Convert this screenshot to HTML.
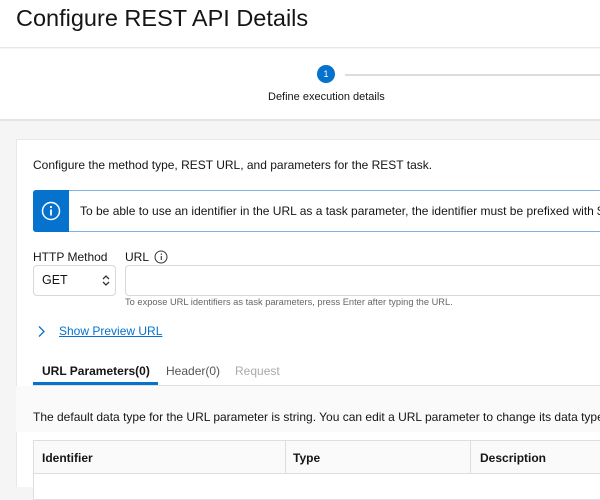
<!DOCTYPE html>
<html><head><style>
*{margin:0;padding:0;box-sizing:border-box}
body{width:600px;height:487px;overflow:hidden;background:#f5f5f5;font-family:"Liberation Sans",Arial,sans-serif;color:#161513;position:relative}
.a{position:absolute;white-space:nowrap}
</style></head><body>
<div class="a" style="left:0;top:0;width:600px;height:48px;background:#fff;border-bottom:1px solid #e6e6e6"></div>
<div class="a" style="left:16px;top:5px;font-size:23.5px;color:#161513">Configure REST API Details</div>
<div class="a" style="left:0;top:49px;width:600px;height:72px;background:#fff;border-bottom:2px solid #e4e4e4"></div>
<div class="a" style="left:317px;top:65px;width:18px;height:18px;border-radius:50%;background:#0572ce;color:#fff;font-size:9px;text-align:center;line-height:18px">1</div>
<div class="a" style="left:345px;top:74px;width:255px;height:2px;background:#dcdcdc"></div>
<div class="a" style="left:268px;top:91px;font-size:11px;color:#161513">Define execution details</div>
<div class="a" style="left:16px;top:139px;width:584px;height:348px;background:#fff;border-top:1px solid #e8e8e8;border-left:1px solid #e8e8e8"></div>
<div class="a" style="left:33px;top:158px;font-size:12px">Configure the method type, REST URL, and parameters for the REST task.</div>
<div class="a" style="left:33px;top:190px;width:580px;height:42px;border:1px solid #7fb2e5;border-radius:3px;background:#fff"></div>
<div class="a" style="left:33px;top:190px;width:36px;height:42px;background:#0572ce;border-radius:3px 0 0 3px"></div>
<svg class="a" style="left:41px;top:201px" width="20" height="20" viewBox="0 0 20 20"><circle cx="10" cy="10" r="8.5" fill="none" stroke="#fff" stroke-width="1.5"/><rect x="9.1" y="8.5" width="1.8" height="6" fill="#fff"/><circle cx="10" cy="6" r="1.1" fill="#fff"/></svg>
<div class="a" style="left:80px;top:204px;font-size:12px">To be able to use an identifier in the URL as a task parameter, the identifier must be prefixed with $</div>
<div class="a" style="left:33px;top:250px;font-size:12px">HTTP Method</div>
<div class="a" style="left:125px;top:250px;font-size:12px">URL</div>
<svg class="a" style="left:154px;top:250px" width="14" height="14" viewBox="0 0 14 14"><circle cx="7" cy="7" r="6" fill="none" stroke="#333" stroke-width="1"/><path d="M7.3 6v4" stroke="#333" stroke-width="1.1"/><circle cx="7.4" cy="4.2" r=".7" fill="#333"/></svg>
<div class="a" style="left:33px;top:265px;width:83px;height:31px;border:1px solid #d8d8d8;border-radius:4px"></div>
<div class="a" style="left:42px;top:273px;font-size:12.5px">GET</div>
<svg class="a" style="left:102px;top:274px" width="8" height="13" viewBox="0 0 8 13"><path d="M1 5l3-3 3 3M1 8l3 3 3-3" fill="none" stroke="#333" stroke-width="1.3"/></svg>
<div class="a" style="left:125px;top:265px;width:480px;height:31px;border:1px solid #d8d8d8;border-radius:4px"></div>
<div class="a" style="left:125px;top:297px;font-size:9.3px;color:#666">To expose URL identifiers as task parameters, press Enter after typing the URL.</div>
<svg class="a" style="left:37px;top:325px" width="10" height="13" viewBox="0 0 10 13"><path d="M2 1.5l5 5-5 5" fill="none" stroke="#0572ce" stroke-width="1.3"/></svg>
<div class="a" style="left:59px;top:324px;font-size:12px;color:#0572ce;text-decoration:underline">Show Preview URL</div>
<div class="a" style="left:42px;top:364px;font-size:12px;font-weight:bold">URL Parameters(0)</div>
<div class="a" style="left:166px;top:364px;font-size:12px;color:#555">Header(0)</div>
<div class="a" style="left:235px;top:364px;font-size:12px;color:#aaa">Request</div>
<div class="a" style="left:33px;top:385px;width:567px;height:1px;background:#dedede"></div>
<div class="a" style="left:33px;top:382px;width:125px;height:3px;background:#0572ce"></div>
<div class="a" style="left:16px;top:386px;width:584px;height:46px;background:#fafafa"></div>
<div class="a" style="left:33px;top:410px;font-size:12px">The default data type for the URL parameter is string. You can edit a URL parameter to change its data type</div>
<div class="a" style="left:33px;top:440px;width:570px;height:60px;border:1px solid #dedede;background:#fff"></div>
<div class="a" style="left:33px;top:440px;width:570px;height:34px;border:1px solid #dedede;background:#fafafa"></div>
<div class="a" style="left:285px;top:440px;width:1px;height:34px;background:#dedede"></div>
<div class="a" style="left:470px;top:440px;width:1px;height:34px;background:#dedede"></div>
<div class="a" style="left:42px;top:451px;font-size:12px;font-weight:bold">Identifier</div>
<div class="a" style="left:293px;top:451px;font-size:12px;font-weight:bold">Type</div>
<div class="a" style="left:480px;top:451px;font-size:12px;font-weight:bold">Description</div>
</body></html>
